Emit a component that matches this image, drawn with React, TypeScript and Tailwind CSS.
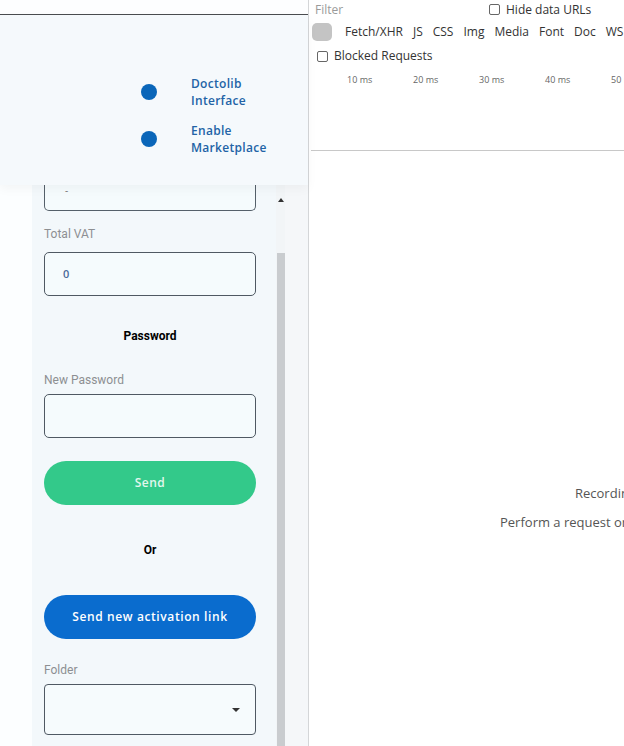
import React from "react";

function Field({ label, children }: { label: string; children?: React.ReactNode }) {
  return (
    <div className="flex flex-col">
      <div className="text-[12px] leading-[16px] text-[#8d8f92]" style={{ fontFamily: "Roboto, sans-serif" }}>{label}</div>
      {children}
    </div>
  );
}

export default function App() {
  const chips = ["Fetch/XHR", "JS", "CSS", "Img", "Media", "Font", "Doc", "WS"];
  const ticks = ["10 ms", "20 ms", "30 ms", "40 ms", "50 ms"];
  return (
    <div className="flex w-[624px] h-[746px] overflow-hidden bg-white" style={{ fontFamily: "'Open Sans', sans-serif" }}>
      {/* Left app panel */}
      <div className="w-[309px] shrink-0 flex flex-col border-r border-[#d4d6d8] bg-[#f7f9fb]">
        <div className="h-[15px] shrink-0 bg-[#fdfeff] border-b border-[#4a4d50]" />
        <div className="h-[170px] shrink-0 bg-[#f5f9fc] flex flex-col pt-[60px] pl-[141px] gap-[13px] shadow-[0_4px_10px_rgba(0,0,0,0.04)] relative z-10">
          {["Doctolib|Interface", "Enable|Marketplace"].map((t) => (
            <div key={t} className="flex items-center gap-[34px]">
              <div className="w-[16px] h-[16px] rounded-full bg-[#0a66b9]" />
              <div className="text-[12px] leading-[17px] font-semibold text-[#2263a6] tracking-[0.3px]">
                {t.split("|").map((l) => (
                  <div key={l}>{l}</div>
                ))}
              </div>
            </div>
          ))}
        </div>
        <div className="flex flex-1 min-h-0">
          <div className="w-[32px] shrink-0 bg-[#fcfeff]" />
          <div className="w-[244px] shrink-0 bg-[#f3f8fb] pl-[12px] pr-[20px] flex flex-col">
            <div className="h-[26px] shrink-0 border-x border-b border-[#55606a] rounded-b-[5px] bg-[#f5fbfd] pl-[20px] text-[10px] leading-[10px] text-[#777]">-</div>
            <div className="mt-[15px]">
              <Field label="Total VAT">
                <div className="mt-[10px] h-[44px] border border-[#4f5963] rounded-[5px] bg-[#f5fbfd] flex items-center pl-[18px] text-[11px] font-semibold text-[#4a6a9a]">0</div>
              </Field>
            </div>
            <div className="mt-[32px] text-center text-[12px] leading-[16px] font-bold text-black" style={{ fontFamily: "Roboto, sans-serif" }}>Password</div>
            <div className="mt-[28px]">
              <Field label="New Password">
                <div className="mt-[6px] h-[44px] border border-[#4f5963] rounded-[5px] bg-[#f5fbfd]" />
              </Field>
            </div>
            <div className="mt-[23px] h-[44px] rounded-full bg-[#33c98a] flex items-center justify-center text-[12px] font-semibold text-[#e3f7ee] tracking-[0.5px]">Send</div>
            <div className="mt-[37px] text-center text-[12px] leading-[16px] font-bold text-black" style={{ fontFamily: "Roboto, sans-serif" }}>Or</div>
            <div className="mt-[37px] h-[44px] rounded-full bg-[#0a6cce] flex items-center justify-center text-[12px] font-semibold text-white tracking-[0.6px]">Send new activation link</div>
            <div className="mt-[23px]">
              <Field label="Folder">
                <div className="mt-[6px] h-[51px] border border-[#4f5963] rounded-[4px] bg-[#f6fbfd] flex items-center justify-end pr-[15px]">
                  <div className="w-0 h-0 border-l-[4px] border-r-[4px] border-t-[4px] border-l-transparent border-r-transparent border-t-[#333]" />
                </div>
              </Field>
            </div>
          </div>
          <div className="w-[9px] shrink-0 bg-[#f2f5f7] flex flex-col items-center">
            <div className="mt-[13px] w-0 h-0 border-l-[3px] border-r-[3px] border-b-[4px] border-l-transparent border-r-transparent border-b-[#333]" />
            <div className="mt-[51px] w-[8px] flex-1 bg-[#c9cccf]" />
          </div>
          <div className="flex-1 bg-[#f5f7f9]" />
        </div>
      </div>

      {/* DevTools network panel */}
      <div className="flex-1 flex flex-col text-[12px] text-[#333] overflow-hidden">
        <div className="h-[19px] flex items-center pl-[6px] pr-2">
          <span className="text-[#9a9a9a] w-[174px]">Filter</span>
          <span className="w-[11px] h-[11px] border border-[#666] rounded-[2px] mr-[6px]" />
          <span className="whitespace-nowrap">Hide data URLs</span>
        </div>
        <div className="h-[26px] flex items-center pl-[3px] whitespace-nowrap">
          <span className="w-[20px] h-[18px] rounded-[5px] bg-[#c4c4c4] mr-[13px] shrink-0" />
          {chips.map((c) => (
            <span key={c} className="mr-[10px] shrink-0">{c}</span>
          ))}
        </div>
        <div className="h-[22px] flex items-center pl-[8px]">
          <span className="w-[11px] h-[11px] border border-[#666] rounded-[2px] mr-[6px]" />
          <span className="whitespace-nowrap">Blocked Requests</span>
        </div>
        <div className="h-[84px] border-b border-[#c8c8c8] ml-[2px] relative">
          <div className="absolute left-[-3px] top-0 h-[24px] border-l border-[#999]" />
          <div className="flex pt-[6px] pl-[36px] text-[9px] text-[#666] whitespace-nowrap">
            {ticks.map((t) => (
              <span key={t} className="w-[66px] shrink-0">{t}</span>
            ))}
          </div>
        </div>
        <div className="flex-1 flex flex-col text-[#555] text-[13px] whitespace-nowrap">
          <div className="mt-[333px] pl-[266px]">Recording network activity…</div>
          <div className="mt-[9px] pl-[191px]">Perform a request or hit Ctrl + R to record the reload.</div>
        </div>
      </div>
    </div>
  );
}
